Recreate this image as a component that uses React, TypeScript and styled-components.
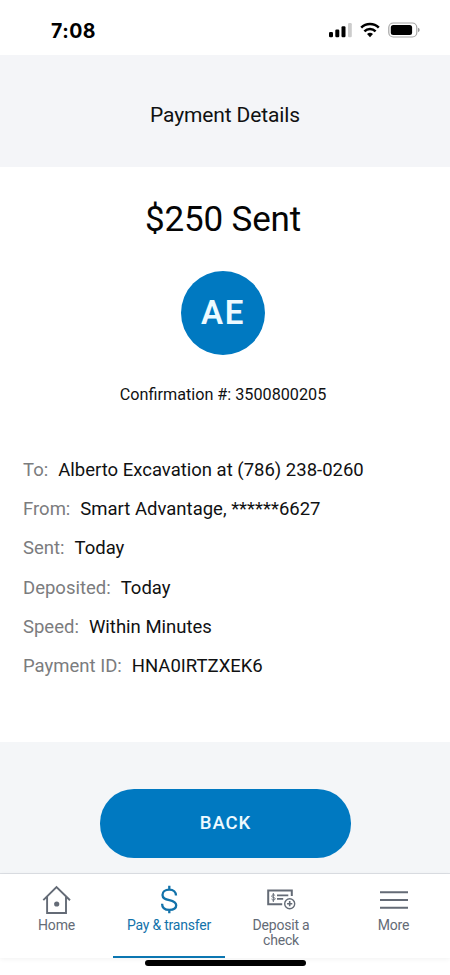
import React from "react";
import styled, { createGlobalStyle } from "styled-components";

const BLUE = "#0079c1";
const ACTIVE = "#1272aa";
const SLATE = "#646b76";

const GlobalStyle = createGlobalStyle`
  * { box-sizing: border-box; }
  body { margin: 0; background: #fff; font-family: Roboto, "Liberation Sans", sans-serif; color: #101112; }
  h1, h2, p, dl, dt, dd { margin: 0; font-weight: 400; }
`;

const Screen = styled.div`
  width: 450px;
  height: 975px;
  display: flex;
  flex-direction: column;
  overflow: hidden;
  background: #fff;
`;

const StatusBar = styled.div`
  height: 55px;
  flex: none;
  display: flex;
  justify-content: space-between;
  padding: 19px 30px 0 51px;
`;

const Clock = styled.span`
  font: 700 19.5px/24px Inter, sans-serif;
  letter-spacing: 0.5px;
  color: #000;
`;

const StatusIcons = styled.svg`
  display: block;
  width: 92px;
  height: 20px;
  margin-top: 2px;
`;

const Header = styled.header`
  height: 112px;
  flex: none;
  background: #f4f5f8;
  display: flex;
  justify-content: center;
  padding-top: 48px;
`;

const Title = styled.h1`
  font-size: 21px;
  line-height: 25px;
  letter-spacing: -0.13px;
`;

const Summary = styled.section`
  width: 446px;
  height: 283px;
  flex: none;
  display: flex;
  flex-direction: column;
  align-items: center;
`;

const Amount = styled.h2`
  margin-top: 31px;
  font-size: 35px;
  line-height: 43px;
  letter-spacing: -0.15px;
  color: #050505;
`;

const Avatar = styled.div`
  width: 84px;
  height: 84px;
  margin-top: 30px;
  border-radius: 50%;
  background: ${BLUE};
  color: #eefaff;
  display: flex;
  justify-content: center;
  font-size: 33px;
  font-weight: 600;
  line-height: 83px;
  letter-spacing: 1.8px;
`;

const Confirmation = styled.p`
  margin-top: 29px;
  font-size: 16.2px;
  line-height: 22px;
`;

const Details = styled.dl`
  height: 292px;
  flex: none;
  padding: 1px 0 0 23px;
`;

const DetailRow = styled.div`
  display: flex;
  gap: 10px;
  height: 39.2px;
  font-size: 18.5px;
  line-height: 39px;
  white-space: nowrap;
`;

const Label = styled.dt`
  color: #7b7c7e;
`;

const Value = styled.dd`
  color: #101112;
`;

const Actions = styled.div`
  height: 132px;
  flex: none;
  padding: 47px 0 0 100px;
  background: #f4f6f8;
  border-bottom: 1px solid #dcdfe4;
`;

const BackButton = styled.button`
  display: block;
  width: 251px;
  height: 69px;
  padding: 0;
  border: 0;
  border-radius: 34px;
  background: ${BLUE};
  color: #eefaff;
  font: 500 18.5px/69px Roboto, sans-serif;
  letter-spacing: 1px;
`;

const TabBar = styled.nav`
  height: 84px;
  flex: none;
  display: grid;
  grid-template-columns: 113px 112px 112px 113px;
  background: #fff;
  box-shadow: 0 1px 5px rgba(0, 0, 0, 0.06);
`;

const Tab = styled.a<{ $active?: boolean }>`
  display: flex;
  flex-direction: column;
  align-items: center;
  padding-top: 10px;
  color: ${(p) => (p.$active ? ACTIVE : SLATE)};
  border-bottom: 2px solid ${(p) => (p.$active ? "#0b76b1" : "transparent")};
  font-size: 14px;
  letter-spacing: -0.22px;
  line-height: 15px;
  text-align: center;

  svg { display: block; flex: none; margin-bottom: 2px; }
`;

const TabLabel = styled.span`
  max-width: 90px;
`;

const HomeIndicator = styled.div`
  width: 161px;
  height: 6px;
  flex: none;
  margin: 2px 0 0 145px;
  border-radius: 3px;
  background: #000;
  position: relative;
`;

const details = [
  ["To:", "Alberto Excavation at (786) 238-0260"],
  ["From:", "Smart Advantage, ******6627"],
  ["Sent:", "Today"],
  ["Deposited:", "Today"],
  ["Speed:", "Within Minutes"],
  ["Payment ID:", "HNA0IRTZXEK6"],
];

const StatusGlyphs = () => (
  <StatusIcons viewBox="328 21 92 20" aria-hidden="true">
    <rect x="329" y="32" width="4" height="5.2" rx="1.2" />
    <rect x="335.3" y="29.5" width="4" height="7.7" rx="1.2" />
    <rect x="341.5" y="26.3" width="4" height="10.9" rx="1.2" />
    <rect x="348" y="23" width="3.8" height="14.2" rx="1.2" fill="#ccc" />
    <g fill="none" stroke="#000" strokeWidth="2.5">
      <path d="M361.2 27.7a12.5 12.5 0 0 1 17.6 0" />
      <path d="M364.4 31.3a8 8 0 0 1 11.2 0" />
    </g>
    <path d="M370 37.3l-3-3.2a4.3 4.3 0 0 1 6 0z" />
    <rect x="388.8" y="23" width="28" height="14" rx="4.5" fill="none" stroke="#a5a5a5" strokeWidth="1.2" />
    <rect x="390.8" y="25" width="21.3" height="10" rx="2.5" />
    <path d="M418 27.8q1.7.6 1.7 2.2t-1.7 2.2z" fill="#999" />
  </StatusIcons>
);

const HomeIcon = () => (
  <svg width="32" height="32" viewBox="40.5 884 32 32" fill="none" stroke="currentColor" strokeWidth="1.9">
    <path d="M42.8 900.2L56 887l13.5 13.2M46.6 896.8V913h18.9v-16.2" />
    <circle cx="56.2" cy="904" r="2.6" fill="currentColor" stroke="none" />
  </svg>
);

const DollarIcon = () => (
  <svg width="32" height="32" viewBox="153 884 32 32" fill="none" stroke="currentColor" strokeWidth="2.3">
    <path d="M169.3 885.7v4M169.3 909v4.3M176 895.6c0-3.5-2.5-6-6.7-6s-6.8 2.3-6.8 5.3c0 3.5 2.8 4.3 6.8 5.2 4.2.9 6.9 2.1 6.9 5.2 0 2.9-2.6 4.6-6.8 4.6-4.5 0-7.3-2.3-7.3-6.2" />
  </svg>
);

const CheckIcon = () => (
  <svg width="32" height="32" viewBox="265 884 32 32" fill="none" stroke="currentColor">
    <path d="M282.2 904.3H268.2v-13.7h23.6v5.5" strokeWidth="2" />
    <path d="M277 895.3h11.3M277 898.8h6.2" strokeWidth="1.8" />
    <path d="M273.3 893v9M275.2 895.7c-1-1.5-3.8-.9-3.4.7.3 1.4 3.3.7 3.4 2.3 0 1.6-2.9 1.8-3.7.3" strokeWidth="1" />
    <circle cx="289.7" cy="903.7" r="5" strokeWidth="1.4" />
    <path d="M287.1 903.7h5.2M289.7 901.1v5.2" strokeWidth="1.6" />
  </svg>
);

const MoreIcon = () => (
  <svg width="32" height="32" viewBox="378 884 32 32" fill="none" stroke="currentColor" strokeWidth="2">
    <path d="M380 892.3h28M380 900h28M380 907.8h28" />
  </svg>
);

export default function App() {
  return (
    <Screen>
      <GlobalStyle />
      <StatusBar>
        <Clock>7:08</Clock>
        <StatusGlyphs />
      </StatusBar>
      <Header>
        <Title>Payment Details</Title>
      </Header>
      <Summary>
        <Amount>$250 Sent</Amount>
        <Avatar>AE</Avatar>
        <Confirmation>Confirmation #: 3500800205</Confirmation>
      </Summary>
      <Details>
        {details.map(([label, value]) => (
          <DetailRow key={label}>
            <Label>{label}</Label>
            <Value>{value}</Value>
          </DetailRow>
        ))}
      </Details>
      <Actions>
        <BackButton>BACK</BackButton>
      </Actions>
      <TabBar>
        <Tab><HomeIcon /><TabLabel>Home</TabLabel></Tab>
        <Tab $active><DollarIcon /><TabLabel>Pay &amp; transfer</TabLabel></Tab>
        <Tab><CheckIcon /><TabLabel>Deposit a<br />check</TabLabel></Tab>
        <Tab><MoreIcon /><TabLabel>More</TabLabel></Tab>
      </TabBar>
      <HomeIndicator />
    </Screen>
  );
}
